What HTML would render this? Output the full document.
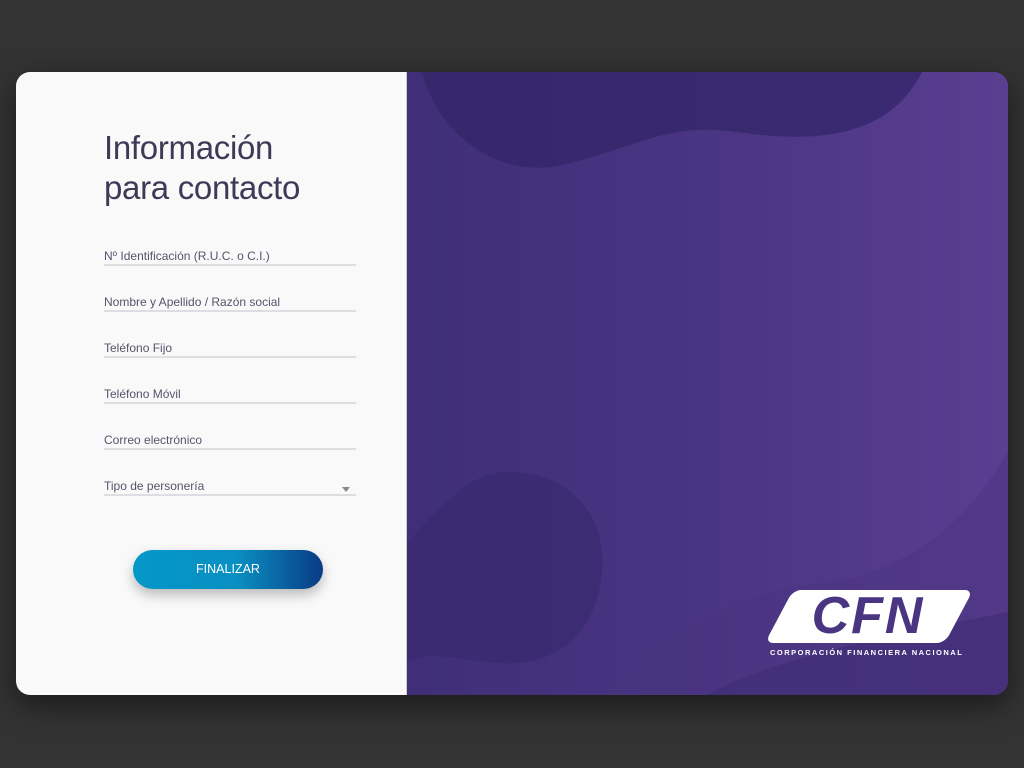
<!DOCTYPE html>
<html><head><meta charset="utf-8"><style>
*{margin:0;padding:0;box-sizing:border-box}
body{width:1024px;height:768px;background:#333333;font-family:"Liberation Sans",sans-serif;position:relative;overflow:hidden}
.card{position:absolute;left:16px;top:72px;width:992px;height:623px;border-radius:14px;overflow:hidden;box-shadow:0 10px 30px rgba(0,0,0,.5)}
.left{position:absolute;left:0;top:0;width:391px;height:623px;background:#f9f9fa;border-right:1px solid #ccc}
.right{position:absolute;left:391px;top:0;width:601px;height:623px;background:linear-gradient(90deg,#3f2e78,#4a3582 50%,#5a3e91)}
h1{position:absolute;left:88px;top:56px;font-weight:normal;font-size:33px;line-height:40px;color:#3c3a55;letter-spacing:-0.3px}
.f{position:absolute;left:88px;width:252px;height:20px;border-bottom:2px solid #dedee2;font-size:12px;color:#55546a;padding-top:3px}
.btn{position:absolute;left:117px;top:478px;width:190px;height:39px;border-radius:20px;background:linear-gradient(90deg,#0398c8,#0a8fc2 55%,#0a3b84);color:#fff;font-size:12.5px;text-align:center;line-height:39px;box-shadow:0 6px 12px rgba(0,0,0,.25)}
</style></head><body>
<div class="card">
<div class="left">
<h1>Información<br>para contacto</h1>
<div class="f" style="top:174px">Nº Identificación (R.U.C. o C.I.)</div>
<div class="f" style="top:220px">Nombre y Apellido / Razón social</div>
<div class="f" style="top:266px">Teléfono Fijo</div>
<div class="f" style="top:312px">Teléfono Móvil</div>
<div class="f" style="top:358px">Correo electrónico</div>
<div class="f" style="top:404px">Tipo de personería<span style="position:absolute;right:6px;top:11px;border:4px solid transparent;border-top:5px solid #888"></span></div>
<div class="btn">FINALIZAR</div>
</div>
<div class="right">
<svg width="601" height="623" style="position:absolute;left:0;top:0">
<path d="M15 0 C30 60 90 110 160 92 C230 75 260 50 330 60 C400 70 480 70 515 0 Z" fill="#35276a" opacity=".8"/>
<path d="M0 470 C30 440 60 400 100 400 C160 400 200 440 195 500 C190 560 150 600 80 590 C40 585 20 580 0 590 Z" fill="#3a2b70" opacity=".8"/>
<path d="M200 623 C260 560 330 520 420 510 C500 500 560 450 601 380 L601 623 Z" fill="#4a3480" opacity=".5"/>
<path d="M300 623 C360 590 450 570 601 540 L601 623 Z" fill="#3f2c75" opacity=".6"/>
</svg>
<div style="position:absolute;left:364px;top:518px;width:190px;height:55px">
<div style="position:absolute;left:8px;top:0;width:180px;height:53px;background:#fff;transform:skewX(-28deg);border-radius:8px"></div>
<div style="position:absolute;left:12px;top:-6px;width:170px;font-size:52px;font-weight:bold;font-style:italic;color:#4a3582;letter-spacing:2px;text-align:center;line-height:64px">CFN</div>
</div>
<div style="position:absolute;left:363px;top:576px;font-size:7.5px;font-weight:bold;color:#fff;letter-spacing:1.5px;white-space:nowrap">CORPORACIÓN FINANCIERA NACIONAL</div>
</div>
</div>
</body></html>
